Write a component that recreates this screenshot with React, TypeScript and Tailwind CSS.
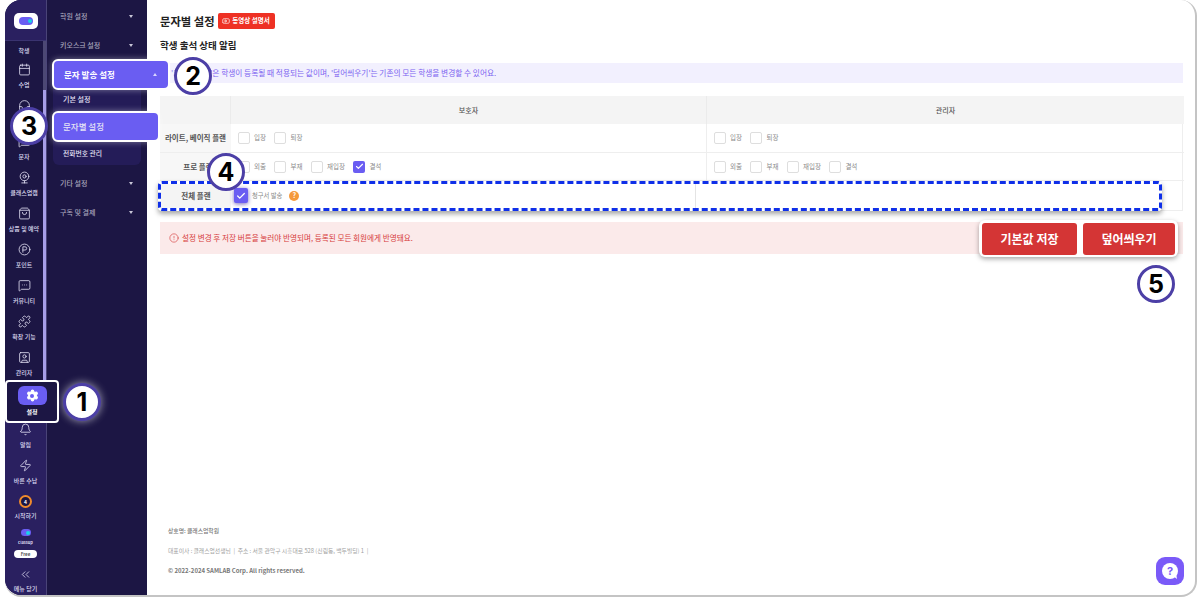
import {
  Bell,
  Calendar,
  ChevronsLeft,
  CircleAlert,
  CircleParking,
  Check,
  Headphones,
  MessageSquare,
  MessageSquareMore,
  Puzzle,
  Settings,
  ShoppingBag,
  SquareUser,
  Webcam,
  Youtube,
  Zap,
} from "lucide-react";

const railItems = [
  { label: "수업", icon: Calendar },
  { label: "출결", icon: Headphones },
  { label: "문자", icon: MessageSquare },
  { label: "클래스업캠", icon: Webcam },
  { label: "상품 및 예약", icon: ShoppingBag },
  { label: "포인트", icon: CircleParking },
  { label: "커뮤니티", icon: MessageSquareMore },
  { label: "확장 기능", icon: Puzzle },
  { label: "관리자", icon: SquareUser },
];

const footItems = [
  { label: "알림", icon: Bell },
  { label: "바른 수납", icon: Zap },
];

function Logo({ className }: { className: string }) {
  return (
    <div className={`relative rounded-full bg-[#6a5df2] ${className}`}>
      <span className="absolute right-[1px] top-1/2 h-[4px] w-[4px] -translate-y-1/2 rounded-full bg-[#19d3e6]" />
    </div>
  );
}

function RailItem({ label, icon: Icon }: { label: string; icon: typeof Bell }) {
  return (
    <div className="flex h-[36px] shrink-0 flex-col items-center gap-[4px] pt-[3px]">
      <Icon size={13} strokeWidth={1.5} className="text-[#e4e2f5]" />
      <span className="whitespace-nowrap text-[6px] font-medium leading-[10px] text-[#dcdaf0]">{label}</span>
    </div>
  );
}

function Caret({ up }: { up?: boolean }) {
  return (
    <span
      className={
        up
          ? "h-0 w-0 border-x-[2.5px] border-b-[3px] border-x-transparent border-b-[#d9d5ff]"
          : "h-0 w-0 border-x-[2.5px] border-t-[3px] border-x-transparent border-t-[#c9c7d8]"
      }
    />
  );
}

function MenuRow({ label }: { label: string }) {
  return (
    <div className="flex h-[29px] shrink-0 items-center justify-between pl-[13px] pr-[14px]">
      <span className="text-[7px] font-medium text-[#a9a6bd]">{label}</span>
      <Caret />
    </div>
  );
}

function Box({ label, checked }: { label: string; checked?: boolean }) {
  return (
    <div className="flex items-center gap-[4px]">
      <span
        className={
          checked
            ? "flex h-[12px] w-[12px] items-center justify-center rounded-[2px] bg-[#6a5df2]"
            : "h-[12px] w-[12px] rounded-[2px] border border-[#dedede] bg-white"
        }
      >
        {checked && <Check size={9} strokeWidth={3} className="text-white" />}
      </span>
      <span className="text-[6.5px] text-[#8a8a8a]">{label}</span>
    </div>
  );
}

function Marker({ n, className }: { n: number; className: string }) {
  return (
    <div
      className={`absolute z-30 flex h-[38px] w-[38px] items-center justify-center rounded-full border-[3px] border-[#4c3fa6] bg-white font-['Inter',sans-serif] text-[25px] font-bold leading-none text-black ${className}`}
    >
      {n}
    </div>
  );
}

const planRow = "flex items-center gap-[8.5px] border-b border-[#eeeeee] pl-[7px]";

export default function App() {
  return (
    <div className="relative h-[598px] w-[1200px] overflow-hidden bg-white font-['Noto_Sans_CJK_KR','Noto_Sans',sans-serif]">
      <div className="ml-[5px] flex h-[597px] w-[1192px] rounded-[16px] border-b-2 border-r-2 border-[#c4c4c4]">
        {/* icon rail */}
        <div className="flex w-[42px] shrink-0 flex-col overflow-hidden rounded-l-[16px] border-r border-[#4a4478] bg-[#1c1644]">
          <div className="flex h-[41px] shrink-0 items-center justify-center border-b border-[#3a3370] bg-[#2a2060] pt-[2px]">
            <div className="flex h-[16px] w-[24px] items-center justify-center rounded-[5px] bg-white">
              <Logo className="h-[8px] w-[14px]" />
            </div>
          </div>
          <div className="relative flex h-[379px] shrink-0 flex-col pr-[3px]">
            <div className="flex h-[19px] shrink-0 items-center justify-center">
              <span className="text-[6px] font-medium text-[#dcdaf0]">학생</span>
            </div>
            {railItems.map((item) => (
              <RailItem key={item.label} {...item} />
            ))}
            <span className="absolute right-0 top-0 h-[49px] w-[3px] bg-[#4c4874]" />
            <span className="absolute right-0 top-[49px] h-[290px] w-[3px] bg-[#a79ee8]" />
          </div>
          <div className="flex flex-1 flex-col bg-[#2a2060]">
            {footItems.map((item) => (
              <RailItem key={item.label} {...item} />
            ))}
            <div className="flex h-[37px] shrink-0 flex-col items-center gap-[3px] pt-[3px]">
              <span className="flex h-[13px] w-[13px] items-center justify-center rounded-full border-[2.5px] border-[#f08a2c] bg-[#1c1644] text-[5px] font-bold text-white">
                4
              </span>
              <span className="text-[6px] font-medium leading-[10px] text-[#dcdaf0]">시작하기</span>
            </div>
            <div className="flex shrink-0 flex-col items-center">
              <Logo className="h-[7px] w-[10px]" />
              <span className="mt-[2px] text-[4px] font-bold leading-[8px] text-[#dcdaf0]">classup</span>
              <span className="mt-[4px] flex h-[8px] w-[23px] items-center justify-center rounded-full bg-white text-[4.5px] font-bold text-[#555555]">
                Free
              </span>
            </div>
            <div className="mt-[10px] flex flex-col items-center gap-[3px]">
              <ChevronsLeft size={13} strokeWidth={1.5} className="text-[#dcdaf0]" />
              <span className="text-[6px] font-medium leading-[10px] text-[#dcdaf0]">메뉴 닫기</span>
            </div>
          </div>
        </div>

        {/* settings menu */}
        <div className="relative z-10 flex w-[100px] shrink-0 flex-col bg-[#1c1644] pt-[2px]">
          <MenuRow label="학원 설정" />
          <MenuRow label="키오스크 설정" />
          <div className="relative z-10 -mt-[1px] ml-[5px] flex h-[31px] w-[118px] shrink-0 items-center justify-between rounded-[6px] border-2 border-white bg-[#6a5df2] pl-[10px] pr-[11px] shadow-[0_0_6px_rgba(255,255,255,0.4)]">
            <span className="text-[8.5px] font-bold text-white">문자 발송 설정</span>
            <Caret up />
          </div>
          <div className="mx-[6px] -mt-[2px] flex flex-col rounded-b-[6px] bg-[#241c58] pb-[1px]">
            <div className="flex h-[23px] items-center pl-[10px]">
              <span className="text-[7px] font-medium text-[#e4e2f5]">기본 설정</span>
            </div>
            <div className="relative z-10 -ml-[1px] flex h-[31px] w-[108px] items-center rounded-[6px] border-2 border-white bg-[#6a5df2] pl-[9px] shadow-[0_0_6px_rgba(255,255,255,0.4)]">
              <span className="text-[8.5px] font-medium text-[#e4e2f5]">문자별 설정</span>
            </div>
            <div className="flex h-[22px] items-center pl-[10px]">
              <span className="text-[6.8px] font-medium text-[#e4e2f5]">전화번호 관리</span>
            </div>
          </div>
          <div className="mt-[4px]">
            <MenuRow label="기타 설정" />
            <MenuRow label="구독 및 결제" />
          </div>
        </div>

        {/* main */}
        <div className="flex min-w-0 flex-1 flex-col pl-[13px] pr-[12px] pt-[13px]">
          <div className="flex h-[16px] items-center gap-[3px]">
            <h1 className="text-[11.3px] font-bold text-[#222222]">문자별 설정</h1>
            <span className="flex h-[16px] w-[57px] items-center justify-center gap-[2px] rounded-[2px] bg-[#ee3124] text-[6.5px] font-bold text-white">
              <Youtube size={8} />
              동영상 설명서
            </span>
          </div>
          <h2 className="mt-[8px] text-[9.5px] font-bold leading-[16px] text-[#222222]">학생 출석 상태 알림</h2>
          <div className="mt-[10px] flex h-[20px] items-center bg-[#f2f0fe] pl-[11px] text-[7.7px] text-[#7a62f0]">
            &apos;기본값 저장&apos;은 학생이 등록될 때 적용되는 값이며, &apos;덮어씌우기&apos;는 기존의 모든 학생을 변경할 수 있어요.
          </div>

          <div className="mt-[13px] grid grid-cols-[71px_476px_477px] grid-rows-[28px_29px_28px_29px] border-b border-r border-[#eeeeee]">
            <div className="border-r border-[#ebebeb] bg-[#f4f4f4]" />
            <div className="flex items-center justify-center border-r border-[#ebebeb] bg-[#f4f4f4] text-[7px] font-medium text-[#555555]">
              보호자
            </div>
            <div className="flex items-center justify-center bg-[#f4f4f4] text-[7px] font-medium text-[#555555]">
              관리자
            </div>

            <div className="flex items-center justify-center border-b border-[#eeeeee] bg-[#f7f7f7] text-[7.5px] font-bold text-[#555555]">
              라이트, 베이직 플랜
            </div>
            <div className={`${planRow} border-r`}>
              <Box label="입장" />
              <Box label="퇴장" />
            </div>
            <div className={planRow}>
              <Box label="입장" />
              <Box label="퇴장" />
            </div>

            <div className="flex items-center justify-center border-b border-[#eeeeee] bg-[#f7f7f7] pl-[5px] text-[7.5px] font-bold text-[#555555]">
              프로 플랜
            </div>
            <div className={`${planRow} border-r`}>
              <Box label="외출" />
              <Box label="부재" />
              <Box label="재입장" />
              <Box label="결석" checked />
            </div>
            <div className={planRow}>
              <Box label="외출" />
              <Box label="부재" />
              <Box label="재입장" />
              <Box label="결석" />
            </div>

            <div className="relative col-span-3">
              <div className="absolute -left-[2px] top-0 z-10 flex h-[30px] w-[1004px] overflow-hidden rounded-[4px] border-[3px] border-dashed border-[#0f2fe8] bg-white shadow-[0_3px_5px_rgba(0,0,0,0.35)]">
                <div className="flex w-[70px] shrink-0 items-center justify-center bg-[#f4f4f4] text-[7.5px] font-bold text-[#555555]">
                  전체 플랜
                </div>
                <div className="flex w-[465px] shrink-0 items-center gap-[4px] border-r border-[#e4e4e4] pb-[1px] pl-[3px]">
                  <span className="flex h-[15px] w-[14px] items-center justify-center rounded-[2px] bg-[#6a5df2] shadow-[0_1px_4px_rgba(60,40,160,0.7)]">
                    <Check size={10} strokeWidth={3} className="text-white" />
                  </span>
                  <span className="text-[6.3px] text-[#8a8a8a]">청구서 발송</span>
                  <span className="ml-[3px] flex h-[10px] w-[10px] items-center justify-center rounded-full bg-[#f59a3c] text-[7px] font-bold text-white">
                    ?
                  </span>
                </div>
              </div>
            </div>
          </div>

          <div className="relative mt-[11px] flex h-[32px] items-center gap-[3px] bg-[#fbeaea] pl-[9px] text-[7.6px] text-[#d63a3a]">
            <CircleAlert size={10} strokeWidth={1.5} />
            설정 변경 후 저장 버튼을 눌러야 반영되며, 등록된 모든 회원에게 반영돼요.
            <div className="absolute right-[5px] -top-[2px] flex h-[37px] w-[199px] items-center justify-center gap-[6px] rounded-[6px] bg-white shadow-[0_2px_5px_rgba(0,0,0,0.35)]">
              <button className="h-[32px] w-[95px] rounded-[3px] bg-[#d43535] text-[12px] font-bold text-white">기본값 저장</button>
              <button className="h-[32px] w-[92px] rounded-[3px] bg-[#d43535] text-[12px] font-bold text-white">덮어씌우기</button>
            </div>
          </div>

          <div className="ml-[8px] mt-auto flex flex-col gap-[12px] pb-[20px] text-[5.8px] leading-[8px]">
            <span className="font-medium text-[#777777]">상호명: 클래스업학원</span>
            <span className="text-[#a0a0a0]">대표이사 : 클래스업선생님 &nbsp;|&nbsp; 주소 : 서울 관악구 시흥대로 528 (신림동, 백두빌딩) 1 &nbsp;|</span>
            <span className="text-[6px] font-bold text-[#777777]">© 2022-2024 SAMLAB Corp. All rights reserved.</span>
          </div>
        </div>
      </div>

      {/* help button */}
      <div className="absolute left-[1156px] top-[557px] flex h-[28px] w-[28px] items-center justify-center rounded-[9px] bg-[#7a5af8]">
        <svg width="18" height="18" viewBox="0 0 18 18">
          <circle cx="9" cy="9" r="8" fill="white" />
          <path d="M12 14l4 3-1-6z" fill="white" />
          <text x="9" y="13" textAnchor="middle" fontSize="11" fontWeight="700" fill="#7a5af8" fontFamily="Inter, sans-serif">
            ?
          </text>
        </svg>
      </div>

      {/* highlighted settings item */}
      <div className="absolute left-[5px] top-[380px] z-20 flex h-[43px] w-[54px] flex-col items-center rounded-[4px] border-2 border-white bg-[#1c1644] pt-[4px]">
        <span className="relative flex h-[19px] w-[29px] items-center justify-center rounded-[6px] bg-[#6a5df2]">
          <Settings size={13} fill="white" className="text-white" />
          <span className="absolute left-1/2 top-1/2 h-[4px] w-[4px] -translate-x-1/2 -translate-y-1/2 rounded-full bg-[#6a5df2]" />
        </span>
        <span className="mt-[2px] text-[6px] font-bold leading-[10px] text-white">설정</span>
      </div>

      <Marker n={1} className="left-[63px] top-[383px] shadow-[0_0_8px_rgba(255,255,255,0.6)]" />
      <Marker n={2} className="left-[174px] top-[57px]" />
      <Marker n={3} className="left-[10px] top-[107px]" />
      <Marker n={4} className="left-[207px] top-[153px]" />
      <Marker n={5} className="left-[1137px] top-[265px]" />
    </div>
  );
}
